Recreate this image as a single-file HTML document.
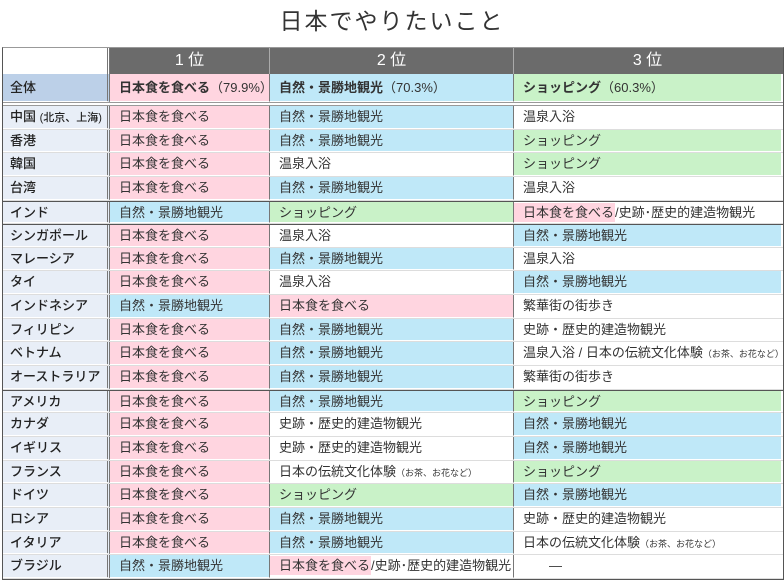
<!DOCTYPE html><html><head><meta charset="utf-8"><style>
body{margin:0;width:784px;height:578px;background:#fff;font-family:"Liberation Sans","Noto Sans CJK JP",sans-serif;color:#333;position:relative;overflow:hidden}
.t{position:absolute;top:2px;left:0;width:784px;text-align:center;font-size:23px;color:#333;letter-spacing:2px}
.g{position:absolute;left:2px;top:47px;width:780px;border:1px solid #555;border-top:1px solid #999}
.r{display:flex;height:23.65px;box-sizing:border-box;border-bottom:1px solid #ddd;background:#fff}
.r>div{box-sizing:border-box;padding-left:9px;font-size:13px;line-height:21px;white-space:nowrap;border-bottom:1px solid #fff;overflow:hidden}
.c0{width:107px;background:#e8eef7;border-right:3px double #777;padding-left:7px!important;color:#222;font-weight:500}
.c1{width:160px;border-right:1px solid #777}
.c2{width:244px;border-right:1px solid #777}
.c3{width:267px}
.p{background:#ffd5e0}.b{background:#bfe8f8}.gr{background:#c9f2c8}
.dk{border-top:1px solid #555}
small{font-size:9px}
.hd{height:26px;background:#6b6b6b;display:flex}
.hd>div{color:#fff;font-size:16px;text-align:center;line-height:26px;box-sizing:border-box}
</style></head><body>
<div class="t">日本でやりたいこと</div>
<div class="g">
<div class="hd"><div style="width:107px;background:#fff;border-right:3px double #777"></div><div style="width:160px;border-right:1px solid #aaa">1 位</div><div style="width:244px;border-right:1px solid #aaa">2 位</div><div style="width:267px">3 位</div></div>
<div class="r" style="height:32px;border-bottom:4px double #999"><div class="c0" style="background:#bcd0e8;line-height:27px">全体</div><div class="c1 p" style="line-height:27px"><b>日本食を食べる</b>（79.9%）</div><div class="c2 b" style="line-height:27px"><b>自然・景勝地観光</b>（70.3%）</div><div class="c3 gr" style="line-height:27px"><b>ショッピング</b>（60.3%）</div></div>
<div class="r"><div class="c0">中国 <span style="font-size:11px">(北京、上海)</span></div><div class="c1 p">日本食を食べる</div><div class="c2 b">自然・景勝地観光</div><div class="c3">温泉入浴</div></div>
<div class="r"><div class="c0">香港</div><div class="c1 p">日本食を食べる</div><div class="c2 b">自然・景勝地観光</div><div class="c3 gr">ショッピング</div></div>
<div class="r"><div class="c0">韓国</div><div class="c1 p">日本食を食べる</div><div class="c2">温泉入浴</div><div class="c3 gr">ショッピング</div></div>
<div class="r"><div class="c0">台湾</div><div class="c1 p">日本食を食べる</div><div class="c2 b">自然・景勝地観光</div><div class="c3">温泉入浴</div></div>
<div class="r dk"><div class="c0">インド</div><div class="c1 b">自然・景勝地観光</div><div class="c2 gr">ショッピング</div><div class="c3"><span class="p" style="margin-left:-9px;padding:2px 1px 2px 9px">日本食を食べる</span>/史跡･歴史的建造物観光</div></div>
<div class="r dk"><div class="c0">シンガポール</div><div class="c1 p">日本食を食べる</div><div class="c2">温泉入浴</div><div class="c3 b">自然・景勝地観光</div></div>
<div class="r"><div class="c0">マレーシア</div><div class="c1 p">日本食を食べる</div><div class="c2 b">自然・景勝地観光</div><div class="c3">温泉入浴</div></div>
<div class="r"><div class="c0">タイ</div><div class="c1 p">日本食を食べる</div><div class="c2">温泉入浴</div><div class="c3 b">自然・景勝地観光</div></div>
<div class="r"><div class="c0">インドネシア</div><div class="c1 b">自然・景勝地観光</div><div class="c2 p">日本食を食べる</div><div class="c3">繁華街の街歩き</div></div>
<div class="r"><div class="c0">フィリピン</div><div class="c1 p">日本食を食べる</div><div class="c2 b">自然・景勝地観光</div><div class="c3">史跡・歴史的建造物観光</div></div>
<div class="r"><div class="c0">ベトナム</div><div class="c1 p">日本食を食べる</div><div class="c2 b">自然・景勝地観光</div><div class="c3">温泉入浴 / 日本の伝統文化体験<small>（お茶、お花など）</small></div></div>
<div class="r"><div class="c0">オーストラリア</div><div class="c1 p">日本食を食べる</div><div class="c2 b">自然・景勝地観光</div><div class="c3">繁華街の街歩き</div></div>
<div class="r dk"><div class="c0">アメリカ</div><div class="c1 p">日本食を食べる</div><div class="c2 b">自然・景勝地観光</div><div class="c3 gr">ショッピング</div></div>
<div class="r"><div class="c0">カナダ</div><div class="c1 p">日本食を食べる</div><div class="c2">史跡・歴史的建造物観光</div><div class="c3 b">自然・景勝地観光</div></div>
<div class="r"><div class="c0">イギリス</div><div class="c1 p">日本食を食べる</div><div class="c2">史跡・歴史的建造物観光</div><div class="c3 b">自然・景勝地観光</div></div>
<div class="r"><div class="c0">フランス</div><div class="c1 p">日本食を食べる</div><div class="c2">日本の伝統文化体験<small>（お茶、お花など）</small></div><div class="c3 gr">ショッピング</div></div>
<div class="r"><div class="c0">ドイツ</div><div class="c1 p">日本食を食べる</div><div class="c2 gr">ショッピング</div><div class="c3 b">自然・景勝地観光</div></div>
<div class="r"><div class="c0">ロシア</div><div class="c1 p">日本食を食べる</div><div class="c2 b">自然・景勝地観光</div><div class="c3">史跡・歴史的建造物観光</div></div>
<div class="r"><div class="c0">イタリア</div><div class="c1 p">日本食を食べる</div><div class="c2 b">自然・景勝地観光</div><div class="c3">日本の伝統文化体験<small>（お茶、お花など）</small></div></div>
<div class="r"><div class="c0">ブラジル</div><div class="c1 b">自然・景勝地観光</div><div class="c2"><span class="p" style="margin-left:-9px;padding:2px 1px 2px 9px">日本食を食べる</span>/史跡･歴史的建造物観光</div><div class="c3" style="padding-left:35px">—</div></div>
</div>
</body></html>
